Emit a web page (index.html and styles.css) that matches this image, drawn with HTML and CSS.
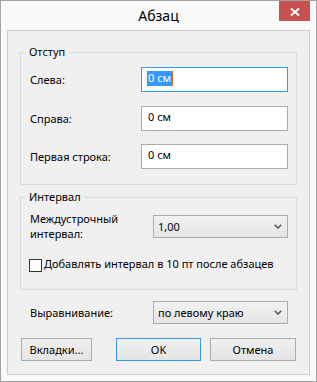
FILE: index.html
```html
<!DOCTYPE html>
<html lang="ru">
<head>
<meta charset="utf-8">
<title>Абзац</title>
<link rel="stylesheet" href="styles.css">
</head>
<body>
<div class="window">
  <div class="titlebar">
    <span class="title">Абзац</span>
    <div class="close">
      <svg width="10" height="8" viewBox="0 0 10 8"><path d="M1 0.5 L9 7.5 M9 0.5 L1 7.5" stroke="#fff" stroke-width="1.9" fill="none"/></svg>
    </div>
  </div>
  <div class="client">
    <fieldset class="group group-indent">
      <legend>Отступ</legend>
      <div class="rows">
        <div class="row">
          <span class="label">Слева:</span>
          <div class="input focused"><span class="sel">0 см</span><span class="caret"></span></div>
        </div>
        <div class="row row-2">
          <span class="label">Справа:</span>
          <div class="input"><span class="val">0 см</span></div>
        </div>
        <div class="row row-3">
          <span class="label">Первая строка:</span>
          <div class="input"><span class="val">0 см</span></div>
        </div>
      </div>
    </fieldset>
    <fieldset class="group group-interval">
      <legend>Интервал</legend>
      <div class="rows rows-interval">
        <div class="row">
          <span class="label two-line">Междустрочный<br>интервал:</span>
          <div class="select"><span>1,00</span>
            <svg width="8" height="5" viewBox="0 0 8 5"><path d="M0.8 0.8 L4 4 L7.2 0.8" stroke="#5a5a5a" stroke-width="1.6" fill="none"/></svg>
          </div>
        </div>
        <div class="check">
          <span class="box"></span>
          <span class="check-text">Добавлять интервал в 10 пт после абзацев</span>
        </div>
      </div>
    </fieldset>
    <div class="row align-row">
      <span class="label">Выравнивание:</span>
      <div class="select"><span>по левому краю</span>
        <svg width="8" height="5" viewBox="0 0 8 5"><path d="M0.8 0.8 L4 4 L7.2 0.8" stroke="#5a5a5a" stroke-width="1.6" fill="none"/></svg>
      </div>
    </div>
    <div class="buttons">
      <div class="btn btn-tabs">Вкладки...</div>
      <div class="btn btn-ok">OK</div>
      <div class="btn btn-cancel">Отмена</div>
    </div>
  </div>
</div>
</body>
</html>
```
FILE: styles.css
```css
html, body {
  margin: 0;
  padding: 0;
  background: #ffffff;
}
body {
  font-family: "Segoe UI", "Noto Sans", sans-serif;
  font-size: 11px;
  color: #000;
}
.window {
  position: relative;
  width: 317px;
  height: 382px;
  box-sizing: border-box;
  border: 1px solid #a3a3a3;
  background: #f9f9f9;
  padding: 0 6px 6px 6px;
  display: flex;
  flex-direction: column;
}
.titlebar {
  height: 29px;
  flex: none;
  text-align: center;
}
.title {
  font-size: 14px;
  line-height: 29px;
  color: #000;
}
.close {
  position: absolute;
  top: 0;
  right: 6px;
  width: 31px;
  height: 20px;
  background: #c75050;
  display: flex;
  align-items: center;
  justify-content: center;
}
.close svg {
  display: block;
  margin-top: 1px;
}
.client {
  flex: 1;
  border: 1px solid #cdcdcd;
  background: #f0f0f0;
  display: flex;
  flex-direction: column;
  padding: 0 12px;
}
.group {
  margin: 0;
  padding: 0;
  border: 1px solid #dcdcdc;
  min-width: 0;
}
.group legend {
  margin-left: 5px;
  padding: 0 3px;
  line-height: 16px;
}
.group-indent {
  margin-top: 13px;
}
.group-interval {
  margin-top: 4px;
}
.rows {
  padding: 7px 8px 15px 9px;
}
.row {
  display: flex;
  align-items: center;
  justify-content: space-between;
}
.row-2 {
  margin-top: 14px;
}
.row-3 {
  margin-top: 13px;
}
.label {
  line-height: 16px;
}
.two-line {
  line-height: 15px;
}
.input {
  width: 147px;
  height: 25px;
  box-sizing: border-box;
  border: 1px solid #abadb3;
  background: #fff;
  padding: 3px 0 0 5px;
  display: flex;
  align-items: flex-start;
  line-height: 14px;
}
.input.focused {
  border-color: #3399ff;
}
.sel {
  background: #3399ff;
  color: #fff;
  padding: 0 1px 1px 1px;
}
.caret {
  width: 1px;
  height: 15px;
  background: #d2691e;
}
.val {
  padding-left: 1px;
}
.rows-interval {
  padding: 6px 8px 17px 9px;
}
.select {
  width: 135px;
  height: 23px;
  box-sizing: border-box;
  border: 1px solid #acacac;
  background: linear-gradient(#f2f2f2, #e5e5e5);
  padding: 0 5px 0 4px;
  display: flex;
  align-items: center;
  justify-content: space-between;
}
.check {
  display: flex;
  align-items: flex-start;
  margin-top: 15px;
  margin-left: -1px;
  line-height: 16px;
}
.box {
  width: 13px;
  height: 13px;
  box-sizing: border-box;
  border: 1px solid #333;
  background: #fff;
  margin-top: 3px;
  margin-right: 2px;
  flex: none;
}
.align-row {
  margin-top: 11px;
  padding: 0 9px 0 10px;
}
.buttons {
  display: flex;
  margin-top: 14px;
  padding: 0 1px 0 1px;
}
.btn {
  height: 23px;
  box-sizing: border-box;
  border: 1px solid #acacac;
  background: linear-gradient(#f0f0f0, #e5e5e5);
  display: flex;
  align-items: center;
  justify-content: center;
}
.btn-tabs {
  width: 71px;
  margin-right: auto;
}
.btn-ok {
  width: 85px;
  border-color: #3399ff;
}
.btn-cancel {
  width: 86px;
  margin-left: 9px;
}
```
